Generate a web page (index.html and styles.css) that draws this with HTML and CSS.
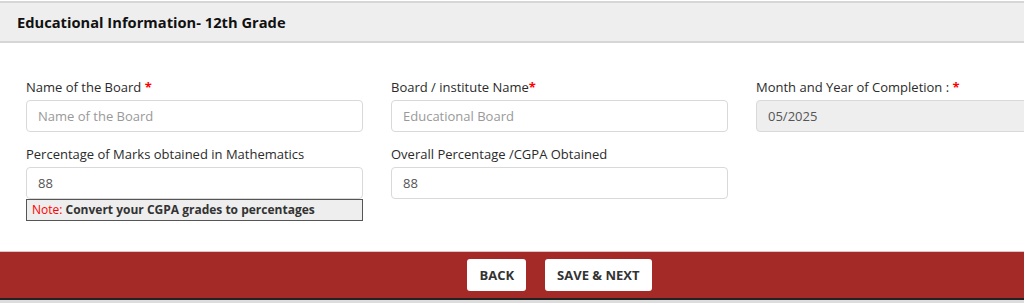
FILE: index.html
```html
<!DOCTYPE html>
<html lang="en">
<head>
    <meta charset="UTF-8">
    <meta name="viewport" content="width=device-width, initial-scale=1.0">
    <title>Educational Information</title>
    <link rel="stylesheet" href="styles.css">
</head>
<body>
    <div class="page">
        <div class="panel-heading">Educational Information- 12th Grade</div>
        <div class="panel-body">
            <div class="form-row">
                <div class="form-group">
                    <label>Name of the Board <span class="req">*</span></label>
                    <input type="text" class="form-control" placeholder="Name of the Board">
                </div>
                <div class="form-group">
                    <label>Board / institute Name<span class="req">*</span></label>
                    <input type="text" class="form-control" placeholder="Educational Board">
                </div>
                <div class="form-group">
                    <label>Month and Year of Completion : <span class="req">*</span></label>
                    <input type="text" class="form-control" value="05/2025" readonly>
                </div>
            </div>
            <div class="form-row">
                <div class="form-group">
                    <label>Percentage of Marks obtained in Mathematics</label>
                    <input type="text" class="form-control" value="88">
                    <div class="note"><span class="note-label">Note:</span> Convert your CGPA grades to percentages</div>
                </div>
                <div class="form-group">
                    <label>Overall Percentage /CGPA Obtained</label>
                    <input type="text" class="form-control" value="88">
                </div>
            </div>
        </div>
        <div class="panel-footer">
            <button class="btn">Back</button>
            <button class="btn">Save &amp; Next</button>
        </div>
        <div class="page-bottom"></div>
    </div>
</body>
</html>
```

FILE: styles.css
```css
html, body {
    margin: 0;
    padding: 0;
    overflow: hidden;
}

body {
    font-family: 'Open Sans', 'Liberation Sans', sans-serif;
    color: #333;
    background-color: #fff;
}

.page {
    width: 1119px;
    padding-top: 1px;
}

.panel-heading {
    background-color: #eeeeee;
    border-top: 2px solid #d6d6d6;
    border-bottom: 2px solid #d6d6d6;
    height: 38px;
    line-height: 38px;
    padding-left: 17px;
    font-size: 14.7px;
    font-weight: bold;
    color: #111;
}

.panel-body {
    padding: 35px 12px 17px 12px;
}

.form-row {
    display: flex;
}

.form-group {
    width: 337px;
    padding: 0 14px;
    margin-bottom: 13px;
}

.form-group label {
    display: block;
    font-size: 13px;
    line-height: 18px;
    margin-bottom: 4px;
    color: #2b2b2b;
}

.req {
    color: #f00;
    font-weight: bold;
}

.form-control {
    display: block;
    box-sizing: border-box;
    width: 100%;
    height: 32px;
    padding: 4px 11px;
    font-family: inherit;
    font-size: 13px;
    color: #555;
    border: 1px solid #d9d9d9;
    border-radius: 4px;
    background-color: #fff;
    outline: none;
}

.form-control::placeholder {
    color: #999;
}

.form-control[readonly] {
    background-color: #eeeeee;
}

.note {
    box-sizing: border-box;
    height: 22px;
    line-height: 19px;
    padding: 0 5px;
    font-size: 12px;
    font-weight: bold;
    background-color: #eeeeee;
    border: 1px solid #555;
}

.note-label {
    color: #f00;
    font-weight: normal;
}

.panel-footer {
    background-color: #a32a27;
    border-top: 1px solid #e3c3c3;
    border-bottom: 2px solid #222;
    height: 46px;
    display: flex;
    justify-content: center;
    align-items: center;
    gap: 19px;
}

.btn {
    background-color: #fff;
    border: none;
    border-radius: 3px;
    height: 32px;
    padding: 0 12px;
    font-family: inherit;
    font-size: 13px;
    font-weight: bold;
    text-transform: uppercase;
    color: #333;
    cursor: pointer;
}

.page-bottom {
    height: 10px;
    background-color: #dcdcdc;
}
```
